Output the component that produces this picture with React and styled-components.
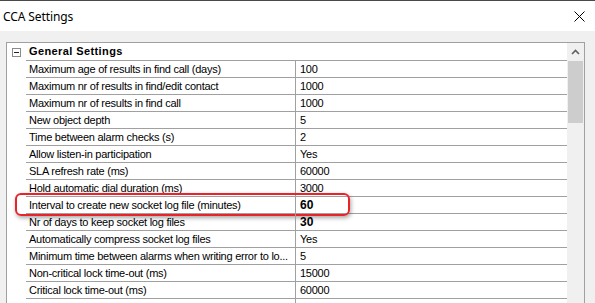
import React from "react";
import styled, { createGlobalStyle } from "styled-components";

const Global = createGlobalStyle`
  html, body { margin: 0; padding: 0; background: #f0f0f0; }
  body { width: 595px; height: 303px; overflow: hidden; }
  #root { width: 595px; height: 303px; overflow: hidden; }
`;

const Window = styled.div`
  display: flex;
  flex-direction: column;
  width: 595px;
  height: 303px;
  background: #f0f0f0;
  border-top: 1px solid #4a4a4a;
  box-sizing: border-box;
`;

const TitleBar = styled.div`
  height: 30px;
  flex: none;
  background: #ffffff;
  display: flex;
  align-items: center;
  justify-content: space-between;
  padding: 0 10px 0 3px;
`;

const Title = styled.span`
  font-family: "Noto Sans", "Segoe UI", sans-serif;
  font-size: 12px;
  color: #000;
  letter-spacing: -0.1px;
`;

const CloseIcon = styled.svg`
  width: 11px;
  height: 11px;
  display: block;
`;

const Body = styled.div`
  flex: 1;
  padding: 11px 10px 0 6px;
  display: flex;
  min-height: 0;
`;

const Grid = styled.div`
  flex: 1;
  display: flex;
  border: 1px solid #a0a0a0;
  border-bottom: none;
  background: #ffffff;
  min-height: 0;
  overflow: hidden;
`;

const Content = styled.div`
  flex: 1;
  display: flex;
  flex-direction: column;
  font-family: "Liberation Sans", Arial, sans-serif;
  font-size: 11px;
  color: #000;
`;

const CategoryRow = styled.div`
  height: 17px;
  flex: none;
  display: flex;
  align-items: center;
  border-bottom: 1px solid #a0a0a0;
  margin-left: 19px;
  padding-left: 0;
  position: relative;
`;

const ToggleBox = styled.span`
  position: absolute;
  left: -14px;
  top: 5px;
  width: 7px;
  height: 7px;
  border: 1px solid #8a8a8a;
  background: #fff;
  display: flex;
  align-items: center;
  justify-content: center;
  &::after {
    content: "";
    width: 5px;
    height: 1px;
    background: #222;
  }
`;

const CategoryLabel = styled.span`
  font-weight: bold;
  letter-spacing: 0.4px;
  padding-left: 3px;
  line-height: 17px;
`;

const Row = styled.div`
  height: 16px;
  flex: none;
  display: grid;
  grid-template-columns: 269px 1fr;
  border-bottom: 1px solid #a0a0a0;
  margin-left: 19px;
  position: relative;
`;

const Cell = styled.div`
  line-height: 16px;
  white-space: nowrap;
  overflow: hidden;
  letter-spacing: -0.25px;
  padding-left: ${(p) => (p.$value ? "4px" : "3px")};
  border-left: ${(p) => (p.$value ? "1px solid #a0a0a0" : "none")};
  font-weight: ${(p) => (p.$bold ? "bold" : "normal")};
  ${(p) => (p.$bold ? "letter-spacing: 0.2px; font-size: 12px;" : "")}
`;

const Highlight = styled.div`
  position: absolute;
  left: -11px;
  top: -4px;
  width: 331px;
  height: 19px;
  border: 2px solid #e8242a;
  border-radius: 6px;
  box-shadow: 1px 2px 4px rgba(0, 0, 0, 0.35);
  pointer-events: none;
`;

const ScrollBar = styled.div`
  width: 17px;
  flex: none;
  background: #f0f0f0;
  display: flex;
  flex-direction: column;
  align-items: center;
`;

const ArrowButton = styled.div`
  height: 18px;
  width: 100%;
  display: flex;
  align-items: center;
  justify-content: center;
`;

const Thumb = styled.div`
  width: 15px;
  height: 62px;
  background: #cdcdcd;
`;

const rows = [
  ["Maximum age of results in find call (days)", "100"],
  ["Maximum nr of results in find/edit contact", "1000"],
  ["Maximum nr of results in find call", "1000"],
  ["New object depth", "5"],
  ["Time between alarm checks (s)", "2"],
  ["Allow listen-in participation", "Yes"],
  ["SLA refresh rate (ms)", "60000"],
  ["Hold automatic dial duration (ms)", "3000"],
  ["Interval to create new socket log file (minutes)", "60", true, true],
  ["Nr of days to keep socket log files", "30", true],
  ["Automatically compress socket log files", "Yes"],
  ["Minimum time between alarms when writing error to lo...", "5"],
  ["Non-critical lock time-out (ms)", "15000"],
  ["Critical lock time-out (ms)", "60000"],
  ["Maximum message queue size (ms)", "10000"],
];

export default function App() {
  return (
    <>
      <Global />
      <Window>
        <TitleBar>
          <Title>CCA Settings</Title>
          <CloseIcon viewBox="0 0 11 11">
            <path d="M0.5 0.5 L10.5 10.5 M10.5 0.5 L0.5 10.5" stroke="#000" strokeWidth="1" fill="none" />
          </CloseIcon>
        </TitleBar>
        <Body>
          <Grid>
            <Content>
              <CategoryRow>
                <ToggleBox />
                <CategoryLabel>General Settings</CategoryLabel>
              </CategoryRow>
              {rows.map(([label, value, bold, hl]) => (
                <Row key={label}>
                  <Cell>{label}</Cell>
                  <Cell $value $bold={bold}>{value}</Cell>
                  {hl && <Highlight />}
                </Row>
              ))}
            </Content>
            <ScrollBar>
              <ArrowButton>
                <svg width="9" height="6" viewBox="0 0 9 6">
                  <path d="M1 5 L4.5 1.5 L8 5" stroke="#606060" strokeWidth="1.6" fill="none" />
                </svg>
              </ArrowButton>
              <Thumb />
            </ScrollBar>
          </Grid>
        </Body>
      </Window>
    </>
  );
}
